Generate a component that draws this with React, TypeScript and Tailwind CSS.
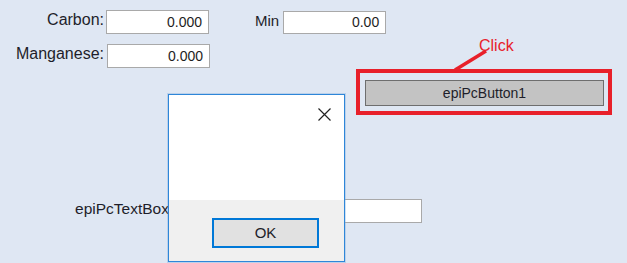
import React from "react";

const font = { fontFamily: '"Liberation Sans", Arial, sans-serif' };

function Box({ className, value }: { className: string; value?: string }) {
  return (
    <div
      className={`bg-white border border-[#a9a9a9] flex items-center justify-end pr-[6px] text-[14px] text-[#1e1e1e] ${className}`}
    >
      {value}
    </div>
  );
}

export default function App() {
  return (
    <div
      className="relative w-[627px] h-[263px] overflow-hidden bg-[#dfe7f3] pt-[10px] text-[#1e1e2a]"
      style={font}
    >
      <div className="flex h-[24px]">
        <div className="w-[104px] text-right text-[16px] leading-[19px]">Carbon:</div>
        <Box className="ml-[2px] w-[103px] h-[24px]" value="0.000" />
        <div className="ml-[46px] text-[15px] leading-[19px] mt-[1px]">Min</div>
        <Box className="ml-[4px] w-[103px] h-[23px] mt-[1px]" value="0.00" />
      </div>
      <div className="flex h-[24px] mt-[10px]">
        <div className="w-[104px] text-right text-[16px] leading-[19px]">Manganese:</div>
        <Box className="ml-[3px] w-[103px] h-[24px]" value="0.000" />
      </div>
      <div className="ml-[356px] mt-[1px] w-[256px] h-[46px] border-4 border-[#e8202a] pl-[5px] pt-[7px]">
        <div className="w-[239px] h-[26px] bg-[#c3c3c3] border-[1.5px] border-[#6e6e6e] flex items-center justify-center text-[14px] text-[#1e1e2a]">
          epiPcButton1
        </div>
      </div>
      <div className="flex h-[24px] mt-[84px]">
        <div className="w-[169px] text-right text-[15.5px] leading-[20px] whitespace-nowrap">epiPcTextBox</div>
        <Box className="ml-[3px] w-[250px] h-[24px]" />
      </div>

      {/* annotation */}
      <div className="absolute left-[479px] top-[34px] text-[16px] text-[#e8202a]">Click</div>
      <svg className="absolute left-0 top-0" width="627" height="263">
        <line x1="455" y1="70" x2="486" y2="51" stroke="#e8202a" strokeWidth="3.5" />
      </svg>

      {/* dialog */}
      <div className="absolute left-[168px] top-[94px] w-[177px] h-[168px] border border-[#2e86d8] shadow-[0_0_0_1px_rgba(120,170,220,0.35)] flex flex-col">
        <div className="h-[105px] bg-white relative">
          <svg className="absolute left-[149px] top-[13px]" width="13" height="13" viewBox="0 0 13 13">
            <path d="M0.5 0.5 L12.5 12.5 M12.5 0.5 L0.5 12.5" stroke="#222" strokeWidth="1.2" fill="none" />
          </svg>
        </div>
        <div className="flex-1 bg-[#f0f0f0] pl-[43px] pt-[18px]">
          <div className="w-[107px] h-[30px] bg-[#e1e1e1] border-2 border-[#0078d7] flex items-center justify-center text-[15px] text-[#1e1e2a]">
            OK
          </div>
        </div>
      </div>
    </div>
  );
}
